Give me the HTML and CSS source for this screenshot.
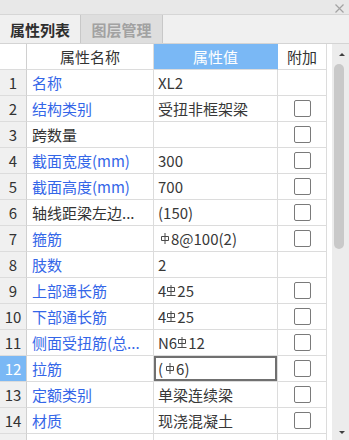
FILE: index.html
```html
<!DOCTYPE html>
<html lang="zh-CN">
<head>
<meta charset="utf-8">
<title>属性列表</title>
<link rel="stylesheet" href="styles.css">
</head>
<body>
<div class="panel">
  <div class="titlebar">
    <svg class="close" width="9" height="9" viewBox="0 0 9 9"><path d="M0.5 0.5L8.5 8.5M8.5 0.5L0.5 8.5" stroke="#a3a3a3" stroke-width="1.2" fill="none"/></svg>
  </div>
  <div class="tabs">
    <div class="tab active">属性列表</div>
    <div class="tab inactive">图层管理</div>
  </div>
  <div class="body">
    <div class="grid">
      <div class="c num head"></div>
      <div class="c center head">属性名称</div>
      <div class="c center head hl">属性值</div>
      <div class="c center head">附加</div>

      <div class="c num">1</div><div class="c name blue">名称</div><div class="c val">XL2</div><div class="c chk"></div>
      <div class="c num">2</div><div class="c name blue">结构类别</div><div class="c val">受扭非框架梁</div><div class="c chk"><span class="box"></span></div>
      <div class="c num">3</div><div class="c name">跨数量</div><div class="c val"></div><div class="c chk"><span class="box"></span></div>
      <div class="c num">4</div><div class="c name blue">截面宽度(mm)</div><div class="c val">300</div><div class="c chk"><span class="box"></span></div>
      <div class="c num">5</div><div class="c name blue">截面高度(mm)</div><div class="c val">700</div><div class="c chk"><span class="box"></span></div>
      <div class="c num">6</div><div class="c name">轴线距梁左边...</div><div class="c val">(150)</div><div class="c chk"><span class="box"></span></div>
      <div class="c num">7</div><div class="c name blue">箍筋</div><div class="c val"><svg class="rb a" width="10" height="11" viewBox="0 0 10 11"><path d="M1.5 3.5H8.5V7.5H1.5Z M5 0V11" stroke="#4a4a4a" stroke-width="1" fill="none"/></svg>8@100(2)</div><div class="c chk"><span class="box"></span></div>
      <div class="c num">8</div><div class="c name blue">肢数</div><div class="c val">2</div><div class="c chk"></div>
      <div class="c num">9</div><div class="c name blue">上部通长筋</div><div class="c val">4<svg class="rb" width="10" height="11" viewBox="0 0 10 11"><path d="M1.5 2.5H8.5V6.5H1.5Z M5 0V10.5 M0.5 10.5H9.5" stroke="#4a4a4a" stroke-width="1" fill="none"/></svg>25</div><div class="c chk"><span class="box"></span></div>
      <div class="c num">10</div><div class="c name blue">下部通长筋</div><div class="c val">4<svg class="rb" width="10" height="11" viewBox="0 0 10 11"><path d="M1.5 2.5H8.5V6.5H1.5Z M5 0V10.5 M0.5 10.5H9.5" stroke="#4a4a4a" stroke-width="1" fill="none"/></svg>25</div><div class="c chk"><span class="box"></span></div>
      <div class="c num">11</div><div class="c name blue">侧面受扭筋(总...</div><div class="c val">N6<svg class="rb" width="10" height="11" viewBox="0 0 10 11"><path d="M1.5 2.5H8.5V6.5H1.5Z M5 0V10.5 M0.5 10.5H9.5" stroke="#4a4a4a" stroke-width="1" fill="none"/></svg>12</div><div class="c chk"><span class="box"></span></div>
      <div class="c num sel">12</div><div class="c name blue">拉筋</div><div class="c val focus">(<svg class="rb a" width="10" height="11" viewBox="0 0 10 11"><path d="M1.5 3.5H8.5V7.5H1.5Z M5 0V11" stroke="#4a4a4a" stroke-width="1" fill="none"/></svg>6)</div><div class="c chk"><span class="box"></span></div>
      <div class="c num">13</div><div class="c name blue">定额类别</div><div class="c val">单梁连续梁</div><div class="c chk"><span class="box"></span></div>
      <div class="c num">14</div><div class="c name blue">材质</div><div class="c val">现浇混凝土</div><div class="c chk"><span class="box"></span></div>
      <div class="c num"></div><div class="c name"></div><div class="c val"></div><div class="c chk"></div>
    </div>
    <div class="gap"></div>
    <div class="scrollbar">
      <span class="arrow up"></span>
      <div class="track"><div class="thumb"></div></div>
      <span class="arrow down"></span>
    </div>
  </div>
</div>
</body>
</html>
```
FILE: styles.css
```css
html, body {
  margin: 0;
  padding: 0;
  background: #ffffff;
}
.panel {
  width: 349px;
  height: 440px;
  overflow: hidden;
  font-family: "Noto Sans CJK SC", "Noto Sans", sans-serif;
  font-size: 15px;
  color: #333333;
  display: flex;
  flex-direction: column;
}
.titlebar {
  height: 14px;
  flex: none;
  background: #e8e8e8;
  border-bottom: 1px solid #d6d6d6;
  display: flex;
  justify-content: flex-end;
  align-items: flex-start;
  padding-right: 5px;
}
.close {
  margin-top: 4px;
  display: block;
}
.tabs {
  height: 28px;
  flex: none;
  background: #f0f0f0;
  display: flex;
  border-bottom: 1px solid #d4d4d4;
}
.tab {
  width: 81px;
  display: flex;
  align-items: center;
  justify-content: center;
  font-weight: bold;
  font-size: 15px;
  box-sizing: border-box;
}
.tab.active {
  background: #f0f0f0;
  color: #2e2e2e;
  border-right: 1px solid #c8c8c8;
}
.tab.inactive {
  background: #dedede;
  color: #a2a2a2;
  border-right: 1px solid #c8c8c8;
  width: 82px;
}
.body {
  flex: 1;
  display: flex;
  min-height: 0;
}
.grid {
  display: grid;
  grid-template-columns: 27px 127px 124px 49px;
  grid-auto-rows: 26px;
  align-content: start;
}
.c {
  box-sizing: border-box;
  border-right: 1px solid #dcdcdc;
  border-bottom: 1px solid #dcdcdc;
  display: flex;
  align-items: center;
  white-space: nowrap;
  overflow: hidden;
  background: #ffffff;
}
.head {
  background: #ffffff;
}
.center {
  justify-content: center;
}
.hl {
  background: #7ab8f5;
  color: #ffffff;
  border-right-color: #7ab8f5;
}
.num {
  background: #f0f0f0;
  justify-content: center;
  color: #333333;
  border-right-color: #d0d0d0;
}
.num.head {
  background: #ffffff;
}
.num.sel {
  background: #7ab8f5;
  color: #ffffff;
}
.name {
  padding-left: 5px;
  color: #333333;
}
.name.blue {
  color: #3466e8;
}
.val {
  padding-left: 4px;
  color: #383838;
}
.val.focus {
  box-shadow: inset 0 0 0 2px #707070;
}
.chk {
  justify-content: center;
}
.box {
  width: 17px;
  height: 17px;
  box-sizing: border-box;
  border: 1px solid #7a7a7a;
  border-radius: 2px;
  background: #ffffff;
  margin-left: 1px;
}
.rb {
  display: inline-block;
  vertical-align: 4px;
  margin: 0 1px 0 0;
}
.rb.a {
  margin-left: 2px;
}
.gap {
  width: 5px;
  flex: none;
}
.scrollbar {
  width: 17px;
  flex: none;
  background: #ececec;
  display: flex;
  flex-direction: column;
  align-items: flex-start;
  padding-left: 2px;
  box-sizing: border-box;
}
.arrow {
  width: 0;
  height: 0;
  border-left: 3px solid transparent;
  border-right: 3px solid transparent;
  margin-left: 5px;
}
.arrow.up {
  border-bottom: 3px solid #404040;
  margin-top: 9px;
}
.arrow.down {
  border-top: 3px solid #404040;
  margin-top: 182px;
}
.track {
  width: 10px;
  margin-top: 8px;
}
.thumb {
  width: 10px;
  height: 185px;
  border-radius: 5px;
  background: #c9c9c9;
}
```
